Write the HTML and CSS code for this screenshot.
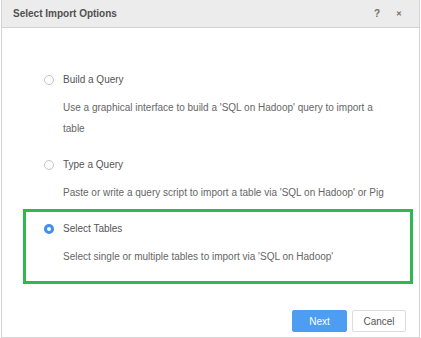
FILE: index.html
```html
<!DOCTYPE html>
<html lang="en">
<head>
  <meta charset="UTF-8" />
  <meta name="viewport" content="width=device-width, initial-scale=1" />
  <title>Select Import Options</title>
  <link rel="stylesheet" href="styles.css">
</head>
<body>
  <div class="dialog">
    <header class="dialog-header">
      <h1>Select Import Options</h1>
      <div class="header-actions">
        <span class="help-btn">?</span>
        <span class="close-btn">&#x2715;</span>
      </div>
    </header>

    <main class="dialog-body">
      <div class="option">
        <div class="option-title"><span class="radio"></span>Build a Query</div>
        <p class="option-desc">Use a graphical interface to build a 'SQL on Hadoop' query to import a table</p>
      </div>
      <div class="option">
        <div class="option-title"><span class="radio"></span>Type a Query</div>
        <p class="option-desc">Paste or write a query script to import a table via 'SQL on Hadoop' or Pig</p>
      </div>
      <div class="option selected">
        <div class="option-title"><span class="radio checked"></span>Select Tables</div>
        <p class="option-desc">Select single or multiple tables to import via 'SQL on Hadoop'</p>
      </div>
    </main>

    <footer class="dialog-footer">
      <button class="btn btn-primary">Next</button>
      <button class="btn">Cancel</button>
    </footer>
  </div>
</body>
</html>
```

FILE: styles.css
```css
body {
  margin: 0;
  font-family: 'Liberation Sans', Arial, sans-serif;
  background: #fff;
  color: #666;
}
.dialog {
  margin-left: 1px;
  width: 419px;
  height: 338px;
  box-sizing: border-box;
  border: 1px solid #d4d4d4;
  border-top: none;
  display: flex;
  flex-direction: column;
}
.dialog-header {
  height: 27px;
  background-color: #ececec;
  border-bottom: 1px solid #d2d2d2;
  display: flex;
  align-items: center;
  justify-content: space-between;
  padding: 0 17px 0 11px;
}
.dialog-header h1 {
  margin: 0;
  font-size: 10px;
  font-weight: 700;
  color: #505050;
}
.header-actions {
  display: flex;
  align-items: center;
  gap: 16px;
}
.help-btn {
  font-size: 10px;
  font-weight: 700;
  color: #707070;
}
.close-btn {
  font-size: 7px;
  font-weight: 700;
  color: #707070;
}
.dialog-body {
  padding: 32px 6px 0 21px;
}
.option {
  border: 3px solid transparent;
  padding: 10px 18px 3px 18px;
}
.option.selected {
  border-color: #2fb84e;
  padding-bottom: 14px;
}
.option-title {
  display: flex;
  align-items: center;
  font-size: 10px;
  line-height: 14px;
  color: #555;
}
.radio {
  width: 10px;
  height: 10px;
  box-sizing: border-box;
  border: 1px solid #c4c4c4;
  border-radius: 50%;
  margin-right: 9px;
  flex-shrink: 0;
}
.radio.checked {
  border: 3px solid #3f8ef0;
  background: #fff;
}
.option-desc {
  margin: 10px 0 0 19px;
  font-size: 10px;
  line-height: 21px;
  color: #666;
}
.dialog-footer {
  margin-top: auto;
  display: flex;
  justify-content: flex-end;
  gap: 5px;
  padding: 0 13px 5px 0;
}
.btn {
  width: 54px;
  height: 22px;
  font-family: 'Liberation Sans', Arial, sans-serif;
  font-size: 10px;
  color: #555;
  background: #fff;
  border: 1px solid #dcdcdc;
  border-radius: 2px;
  padding: 0;
}
.btn-primary {
  width: 55px;
  background-color: #4d9df2;
  border-color: #4d9df2;
  color: #fff;
}
```
